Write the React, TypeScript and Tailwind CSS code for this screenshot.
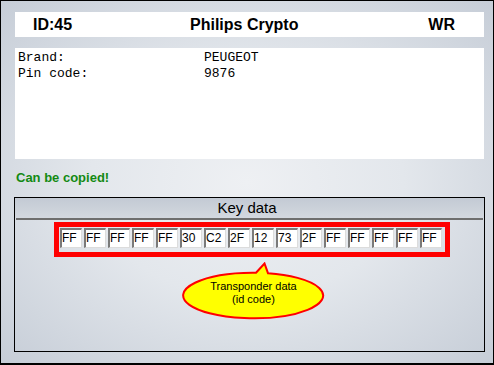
import React from 'react';

const keyBytes = ['FF', 'FF', 'FF', 'FF', 'FF', '30', 'C2', '2F', '12', '73', '2F', 'FF', 'FF', 'FF', 'FF', 'FF'];

const info = [
  { label: 'Brand:', value: 'PEUGEOT' },
  { label: 'Pin code:', value: '9876' },
];

function Callout() {
  return (
    <div className="relative ml-[167px] mt-[5px] w-[143px] h-[58px]">
      <svg className="absolute inset-0" width="143" height="58" viewBox="0 0 143 58">
        <path
          d="M74 10.7 L82.5 1.5 L86 11.2 A70 22.8 0 1 1 74 10.7 Z"
          fill="#ffff00"
          stroke="#ff0000"
          strokeWidth="2"
        />
      </svg>
      <div className="relative pt-[18px] text-center text-[11px] leading-[13px] text-black">
        <div>Transponder data</div>
        <div>(id code)</div>
      </div>
    </div>
  );
}

export default function App() {
  return (
    <div
      className="w-[494px] h-[365px] box-border border border-b-2 border-black overflow-hidden bg-[radial-gradient(ellipse_at_center,#eef0f3_0%,#e3e7ec_45%,#c6cdd7_100%)]"
      style={{ fontFamily: '"Liberation Sans", Arial, sans-serif' }}
    >
      {/* header bar */}
      <div className="ml-[14px] mt-[11px] w-[469px] h-[25px] bg-white flex items-center pl-[18px] text-[16px] font-bold text-black">
        <span className="w-[157px]">ID:45</span>
        <span>Philips Crypto</span>
        <span className="ml-auto pr-[29px]">WR</span>
      </div>

      {/* info panel */}
      <div
        className="ml-[14px] mt-[11px] w-[469px] h-[111px] bg-white pl-[3px] pt-[2px] text-[13px] leading-[16px] text-black"
        style={{ fontFamily: '"Liberation Mono", "Courier New", monospace' }}
      >
        {info.map(row => (
          <div key={row.label} className="flex">
            <span className="w-[186px]">{row.label}</span>
            <span>{row.value}</span>
          </div>
        ))}
      </div>

      <div className="ml-[15px] mt-[11px] text-[13px] leading-[15px] font-bold text-[#138a13]">
        Can be copied!
      </div>

      {/* key data box */}
      <div className="ml-[13px] mt-[12px] w-[471px] h-[155px] box-border border border-black">
        <div className="h-[20px] leading-[20px] text-center text-[15px] text-black pr-[5px] bg-gradient-to-b from-[#c3cad4] to-[#d3d8df]">
          Key data
        </div>
        <div className="mx-[1px] h-[2px] bg-[#6e6e6e]" />

        <div className="ml-[39px] mt-[2px] w-[396px] h-[35px] box-border border-[5px] border-[#ff0000] flex gap-[2px] pl-[1px] pt-[1px]">
          {keyBytes.map((b, i) => (
            <div
              key={i}
              className="w-[22px] h-[20px] box-border bg-white border-t-2 border-l-2 border-r border-b border-t-[#7a7a7a] border-l-[#7a7a7a] border-r-[#dcdcdc] border-b-[#dcdcdc] text-[12px] leading-[17px] text-black"
            >
              {b}
            </div>
          ))}
        </div>

        <Callout />
      </div>
    </div>
  );
}
